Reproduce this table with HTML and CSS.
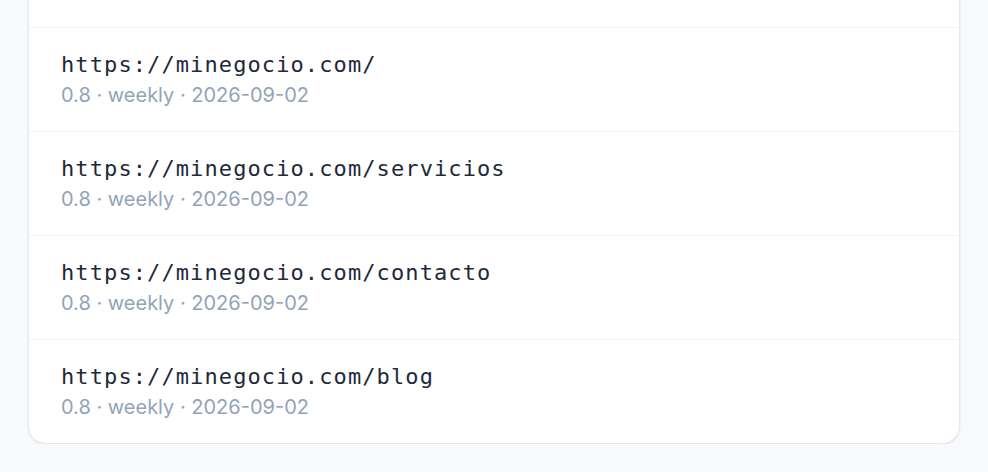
FILE: index.html
```html
<!DOCTYPE html>
<html lang="es">
<head>
<meta charset="utf-8">
<title>Sitemap</title>
<link rel="stylesheet" href="styles.css">
</head>
<body>
<main class="page">
  <section class="card">
    <div class="row">
      <div class="url">https://minegocio.com/</div>
      <div class="meta">0.8 · weekly · 2026-09-02</div>
    </div>
    <div class="row">
      <div class="url">https://minegocio.com/servicios</div>
      <div class="meta">0.8 · weekly · 2026-09-02</div>
    </div>
    <div class="row">
      <div class="url">https://minegocio.com/contacto</div>
      <div class="meta">0.8 · weekly · 2026-09-02</div>
    </div>
    <div class="row">
      <div class="url">https://minegocio.com/blog</div>
      <div class="meta">0.8 · weekly · 2026-09-02</div>
    </div>
  </section>
</main>
</body>
</html>
```
FILE: styles.css
```css
html, body {
  margin: 0;
  padding: 0;
  background: #f8fafc;
  overflow: hidden;
}
.page {
  padding: 0 28px;
}
.card {
  margin-top: -20px;
  padding-top: 46px;
  background: #ffffff;
  border: 1px solid #e2e8f0;
  border-radius: 18px;
  box-shadow: 0 1px 3px rgba(15, 23, 42, 0.08);
  overflow: hidden;
}
.row {
  height: 104px;
  box-sizing: border-box;
  padding: 21px 32px 0;
  border-top: 1px solid #f1f5f9;
}
.url {
  font-family: "DejaVu Sans Mono", monospace;
  font-size: 22px;
  letter-spacing: 0.05em;
  line-height: 32px;
  color: #1e293b;
}
.meta {
  font-family: Inter, "Noto Sans", sans-serif;
  font-size: 20px;
  line-height: 28px;
  color: #94a3b8;
}
```
